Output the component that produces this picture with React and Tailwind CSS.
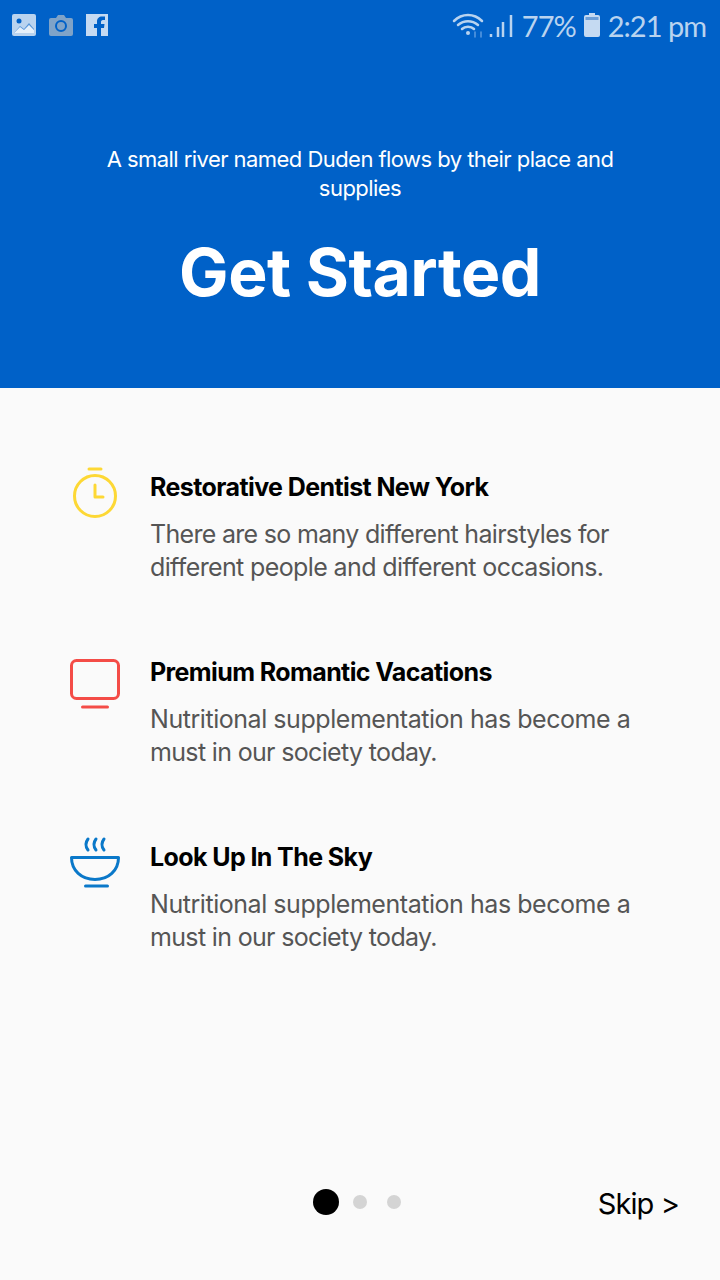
const features = [
  {
    title: "Restorative Dentist New York",
    lines: [
      { text: "There are so many different hairstyles for", cls: "tracking-[-0.69px]" },
      { text: "different people and different occasions.", cls: "tracking-[-0.62px]" },
    ],
    icon: (
      <svg width="50" height="60" viewBox="0 0 50 60" fill="none" stroke="#fdd835" strokeWidth="3" strokeLinecap="round" strokeLinejoin="round">
        <path d="M19 3h12" />
        <circle cx="25" cy="30" r="20.500" />
        <path d="M25 19v12h8" />
      </svg>
    ),
  },
  {
    title: "Premium Romantic Vacations",
    lines: [
      { text: "Nutritional supplementation has become a", cls: "tracking-[-0.45px]" },
      { text: "must in our society today.", cls: "tracking-[-0.66px]" },
    ],
    icon: (
      <svg width="50" height="60" viewBox="0 0 50 60" fill="none" stroke="#f44c47" strokeWidth="3" strokeLinecap="round" strokeLinejoin="round">
        <rect x="1.500" y="9.500" width="47" height="38" rx="5" />
        <path d="M12.500 56h25" />
      </svg>
    ),
  },
  {
    title: "Look Up In The Sky",
    lines: [
      { text: "Nutritional supplementation has become a", cls: "tracking-[-0.45px]" },
      { text: "must in our society today.", cls: "tracking-[-0.66px]" },
    ],
    icon: (
      <svg width="50" height="60" viewBox="0 0 50 60" fill="none" stroke="#0a78c9" strokeWidth="3" strokeLinecap="round" strokeLinejoin="round">
        <path d="M18 3c-3 4-3 7 0 11M26 3c-3 4-3 7 0 11M34 3c-3 4-3 7 0 11" />
        <path d="M1.500 21.500h47c0 13-10 22-23.500 22S1.500 34.500 1.500 21.500z" />
        <path d="M15.500 50h22" />
      </svg>
    ),
  },
];

function StatusBar() {
  return (
    <div className="flex h-[50px] items-center justify-between pl-3 pr-[14px] text-[#b9d3ef]">
      <div className="flex items-center gap-[13px]">
        <svg width="24" height="22" viewBox="0 0 24 22">
          <rect width="24" height="22" rx="2" fill="#b9d3ef" />
          <circle cx="7" cy="7" r="2.500" fill="#0061c8" />
          <path d="M2 19l6-7 4 3 5-6 5 6v4z" fill="#0061c8" opacity="0.55" />
          <path d="M2 19l6-6 4 3 5-5 5 5v3z" fill="#e6f0fa" />
        </svg>
        <svg width="24" height="22" viewBox="0 0 24 22">
          <path d="M2 4h5l2-3h6l2 3h5a2 2 0 0 1 2 2v14a2 2 0 0 1-2 2H2a2 2 0 0 1-2-2V6a2 2 0 0 1 2-2z" fill="#7fa3c8" />
          <circle cx="12" cy="12" r="5" fill="none" stroke="#0061c8" strokeWidth="2" />
        </svg>
        <svg width="22" height="22" viewBox="0 0 22 22">
          <path d="M0 0h22v22h-7v-8h3l.500-4H15V8c0-1 .500-2 2-2h2V2.500h-3c-3 0-5 2-5 5V10H8v4h3v8H0z" fill="#c5daf2" />
        </svg>
      </div>
      <div className="flex items-center gap-[8px]">
        <svg width="62" height="26" viewBox="0 0 62 26" fill="none" stroke="#b9d3ef" strokeLinecap="round">
          <path d="M2 9c8-8 20-8 28 0M6 13c6-5 14-5 20 0M10 17c3-3 9-3 12 0" strokeWidth="2.500" />
          <circle cx="16" cy="21" r="2" fill="#b9d3ef" stroke="none" />
          <path d="M23 20v5M29 25v-5" stroke="#5b9be0" strokeWidth="1.500" />
          <path d="M39 22v3M46 15v10M51 10v15M59 3v22" strokeWidth="2.500" strokeLinecap="butt" />
        </svg>
        <span className="font-['Lato',sans-serif] text-[29px] leading-none tracking-[-1px]">77%</span>
        <svg width="16" height="24" viewBox="0 0 16 24">
          <path d="M5 0h6v2h3a2 2 0 0 1 2 2v18a2 2 0 0 1-2 2H2a2 2 0 0 1-2-2V4a2 2 0 0 1 2-2h3z" fill="#c5daf2" />
          <rect x="1.500" y="4" width="13" height="3" fill="#6d9fd8" />
        </svg>
        <span className="font-['Lato',sans-serif] text-[29px] leading-none tracking-[-1px]">2:21 pm</span>
      </div>
    </div>
  );
}

export default function App() {
  return (
    <div className="flex h-[1280px] w-[720px] flex-col bg-[#fafafa] font-['Inter',sans-serif]">
      {/* Header */}
      <div className="h-[388px] bg-[#0061c8] text-center text-white">
        <StatusBar />
        <p className="mt-[95px] text-[22px] leading-[29px] tracking-[-0.55px]">
          A small river named Duden flows by their place and
          <br />
          supplies
        </p>
        <h1 className="mt-[29px] text-[66px] font-bold leading-[80px] tracking-[-0.5px]">Get Started</h1>
      </div>

      {/* Features */}
      <div className="flex flex-col gap-[69px] pl-[70px] pt-[80px]">
        {features.map((f) => (
          <div key={f.title} className="flex h-[116px] gap-[30px]">
            <div className="mt-[-2px]">{f.icon}</div>
            <div>
              <h2 className="text-[25px] font-bold leading-[38px] tracking-[-0.6px] text-black">{f.title}</h2>
              <div className="mt-[12px] text-[25px] leading-[33px] text-[#555555]">
                {f.lines.map((l) => (
                  <p key={l.text} className={l.cls}>{l.text}</p>
                ))}
              </div>
            </div>
          </div>
        ))}
      </div>

      {/* Footer */}
      <div className="relative mt-auto mb-[58px] flex h-[40px] items-center justify-center">
        <div className="flex items-center gap-[14px] pr-[6px]">
          <span className="h-[26px] w-[26px] rounded-full bg-black" />
          <span className="h-[14px] w-[14px] rounded-full bg-[#d4d4d4]" />
          <span className="ml-[6px] h-[14px] w-[14px] rounded-full bg-[#d4d4d4]" />
        </div>
        <span className="absolute right-[41px] top-0 text-[29px] tracking-[-0.9px] text-black">Skip &gt;</span>
      </div>
    </div>
  );
}
